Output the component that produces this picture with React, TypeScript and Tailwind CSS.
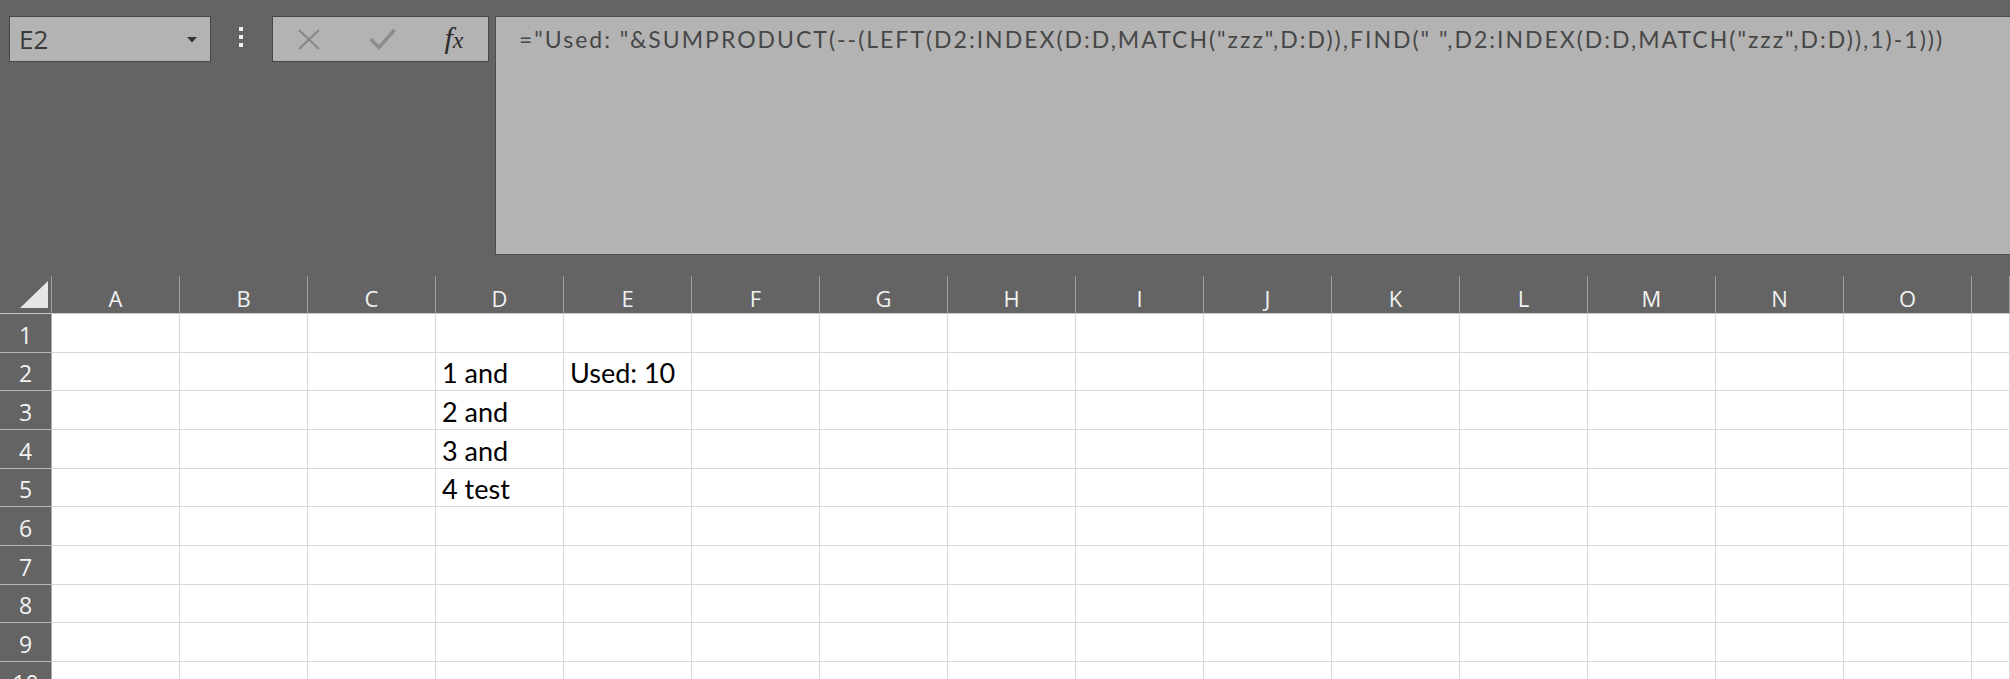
import React from "react";

const COLS = ["A", "B", "C", "D", "E", "F", "G", "H", "I", "J", "K", "L", "M", "N", "O", ""];
const ROWS = [1, 2, 3, 4, 5, 6, 7, 8, 9, 10];
const DATA: Record<string, string> = {
  D2: "1 and",
  E2: "Used: 10",
  D3: "2 and",
  D4: "3 and",
  D5: "4 test",
};
const FORMULA =
  '="Used: "&SUMPRODUCT(--(LEFT(D2:INDEX(D:D,MATCH("zzz",D:D)),FIND(" ",D2:INDEX(D:D,MATCH("zzz",D:D)),1)-1)))';

function TopBar() {
  return (
    <div className="flex items-start pt-[16px] h-[276px]">
      {/* Name box */}
      <div className="ml-[9px] w-[202px] h-[46px] border border-[#474747] bg-[#b3b3b3] flex items-center pl-[9px] pr-[13px]">
        <span className="text-[26px] leading-none text-[#3a3a3a] font-['Open_Sans',sans-serif]">E2</span>
        <span className="flex-1" />
        <svg width="10" height="6" viewBox="0 0 10 6" className="mt-[1px]">
          <polygon points="0,0 10,0 5,5.5" fill="#333333" />
        </svg>
      </div>
      {/* dots */}
      <div className="w-[61px] h-[46px] flex flex-col items-center pt-[11px] gap-[4px] pr-[2px]">
        <div className="w-[4px] h-[4px] bg-[#f2f2f2]" />
        <div className="w-[4px] h-[4px] bg-[#f2f2f2]" />
        <div className="w-[4px] h-[4px] bg-[#f2f2f2]" />
      </div>
      {/* buttons */}
      <div className="w-[217px] h-[46px] border border-[#474747] bg-[#b3b3b3] flex items-center pl-[25px]">
        <svg width="22" height="21" viewBox="0 0 22 21">
          <line x1="1" y1="1" x2="21" y2="20" stroke="#878787" strokeWidth="2" />
          <line x1="21" y1="1" x2="1" y2="20" stroke="#878787" strokeWidth="2" />
        </svg>
        <svg width="27" height="22" viewBox="0 0 27 22" className="ml-[49px]">
          <polyline points="1.5,11 10,19.5 25.5,2" fill="none" stroke="#8c8c8c" strokeWidth="3.5" />
        </svg>
        <span className="ml-[44px] w-[28px] text-center font-['Liberation_Serif',serif] italic text-[30px] leading-none text-[#2b2b2b] -mt-[2px]">
          f<span className="text-[24px]">x</span>
        </span>
      </div>
      {/* formula */}
      <div className="ml-[6px] flex-1 h-[239px] border-l border-t border-b border-[#4d4d4d] bg-[#b3b3b3] pl-[23px] pt-[11px] overflow-hidden">
        <div className="font-['Lato',sans-serif] text-[23px] tracking-[2px] leading-none text-[#474747] whitespace-nowrap">
          {FORMULA}
        </div>
      </div>
    </div>
  );
}

export default function App() {
  return (
    <div className="w-[2010px] h-[679px] overflow-hidden bg-[#646464] font-['Open_Sans',sans-serif]">
      <TopBar />
      <div className="grid grid-cols-[52px_repeat(15,128px)_1fr]">
        {/* header row */}
        <div className="h-[38px] border-r border-b border-r-[#9e9e9e] border-b-[#c9c9c9] relative">
          <svg width="52" height="37" viewBox="0 0 52 37" className="absolute left-0 top-0">
            <polygon points="20,32 48,32 48,5" fill="#e6e6e6" />
          </svg>
        </div>
        {COLS.map((c, i) => (
          <div
            key={"h" + i}
            className="h-[38px] border-r border-b border-r-[#9e9e9e] border-b-[#c9c9c9] flex items-end justify-center pb-[4px]"
          >
            <span className="text-[22px] leading-none text-[#f2f2f2]">{c}</span>
          </div>
        ))}
        {ROWS.map((r) => (
          <React.Fragment key={r}>
            <div className="h-[38.67px] border-r border-b border-r-[#a8a8a8] border-b-[#b8b8b8] flex items-end justify-center pb-[5px]">
              <span className="text-[23px] leading-none text-[#f2f2f2]">{r}</span>
            </div>
            {COLS.map((c, i) => {
              const v = DATA[c + r];
              return (
                <div
                  key={c + r + i}
                  className="h-[38.67px] bg-white border-r border-b border-[#d9d9d9] flex items-end pl-[6px] pb-[4px] overflow-visible whitespace-nowrap"
                >
                  {v ? (
                    <span className="font-['Lato',sans-serif] text-[27px] leading-none text-black">{v}</span>
                  ) : null}
                </div>
              );
            })}
          </React.Fragment>
        ))}
      </div>
    </div>
  );
}
